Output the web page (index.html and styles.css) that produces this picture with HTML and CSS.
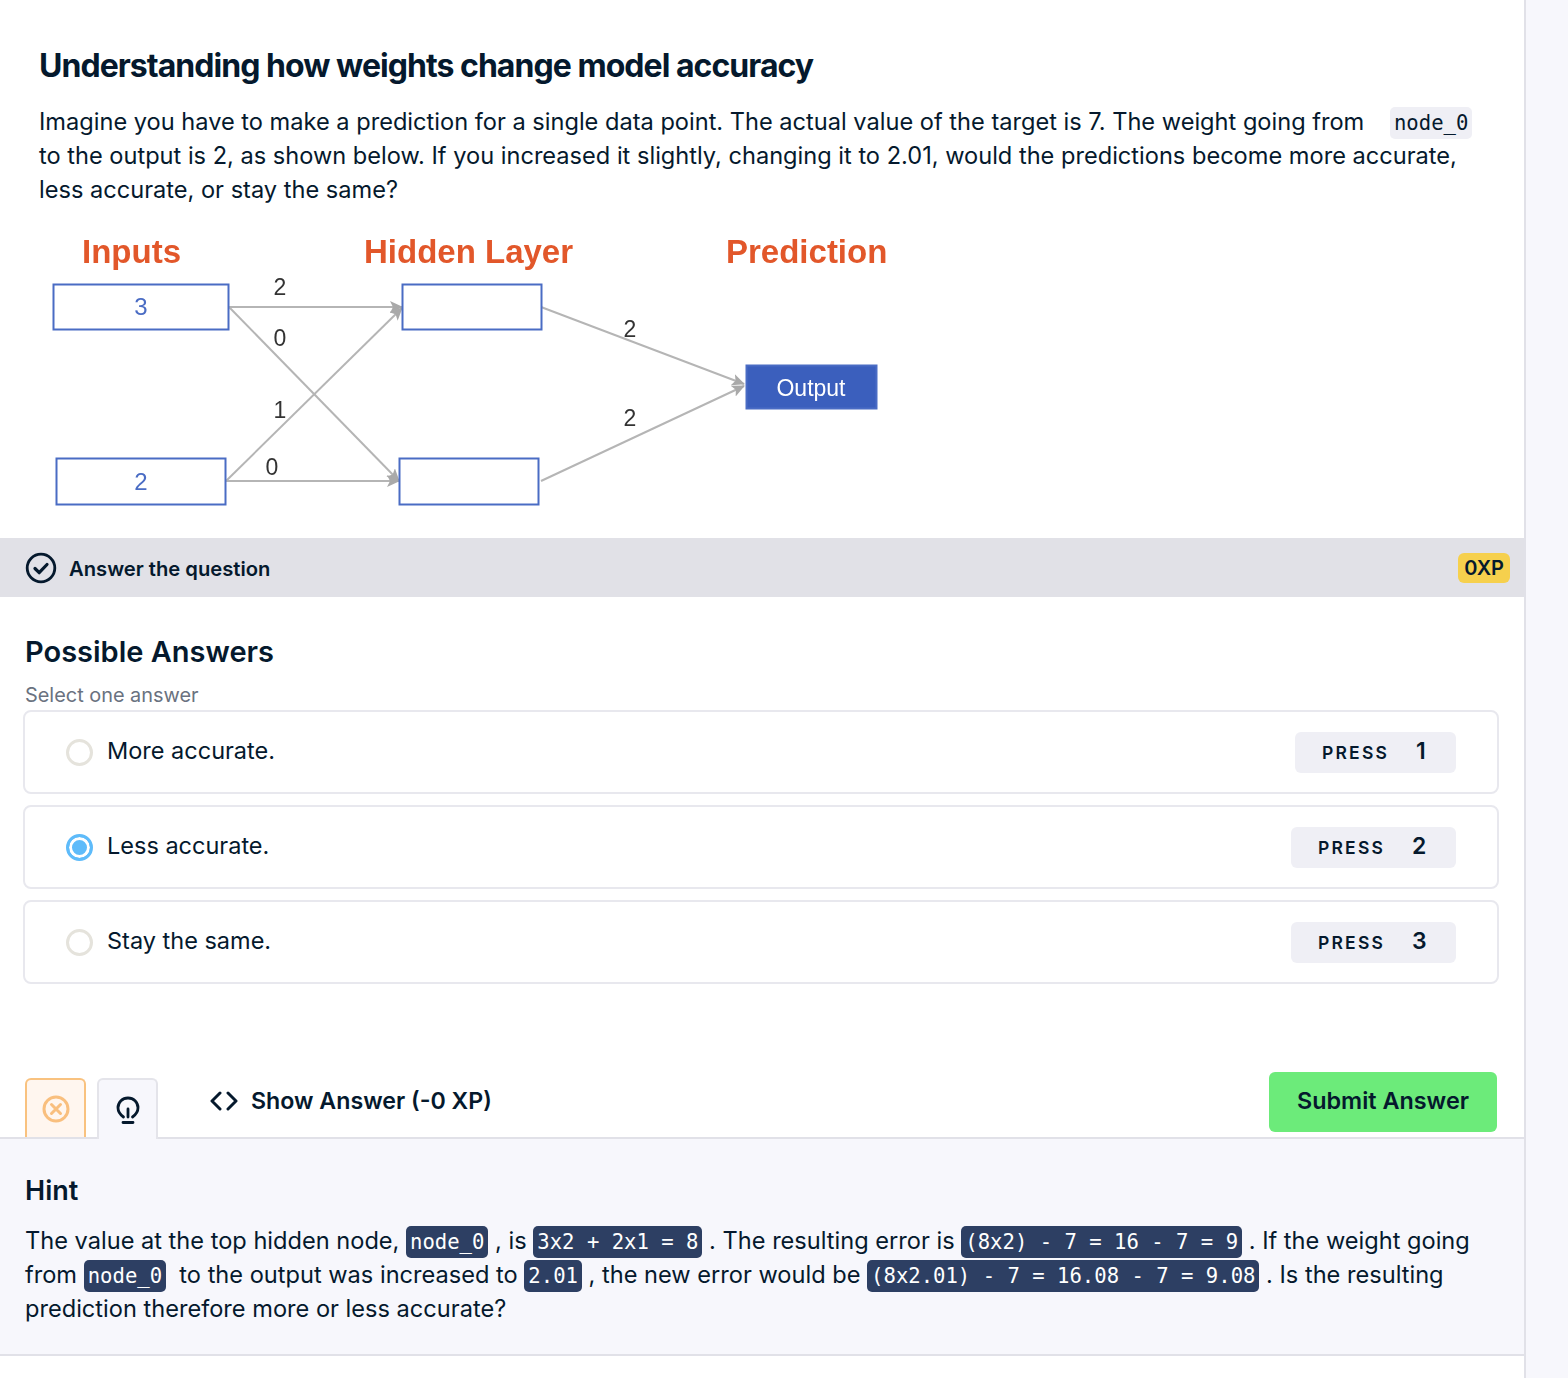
FILE: index.html
```html
<!DOCTYPE html>
<html lang="en">
<head>
  <meta charset="utf8">
  <title>Understanding how weights change model accuracy</title>
  <link rel="stylesheet" href="styles.css">
</head>
<body>
  <main class="exercise">
    <section class="context">
      <h1>Understanding how weights change model accuracy</h1>
      <p>Imagine you have to make a prediction for a single data point. The actual value of the target is 7. The weight going from <code class="gap">node_0</code> to the output is 2, as shown below. If you increased it slightly, changing it to 2.01, would the predictions become more accurate, less accurate, or stay the same?</p>
      <svg class="diagram" width="880" height="294" viewBox="0 0 880 294">
        <defs>
          <marker id="arrow" markerWidth="14" markerHeight="12" refX="12" refY="6" orient="auto" markerUnits="userSpaceOnUse">
            <path d="M0 0L13 6L0 12L3 6Z" fill="#a9a9a9"/>
          </marker>
        </defs>
        <g class="heads">
          <text x="48" y="37">Inputs</text>
          <text x="330" y="37">Hidden Layer</text>
          <text x="692" y="37">Prediction</text>
        </g>
        <g class="wires">
          <path d="M195 81H368" marker-end="url(#arrow)"/>
          <path d="M195 81L365 255" marker-end="url(#arrow)"/>
          <path d="M192 255L368 82" marker-end="url(#arrow)"/>
          <path d="M192 255H365" marker-end="url(#arrow)"/>
          <path d="M507 81L710 158" marker-end="url(#arrow)"/>
          <path d="M507 255L710 160" marker-end="url(#arrow)"/>
        </g>
        <g class="boxes">
          <rect x="19.5" y="58.5" width="175" height="45"/>
          <rect x="22.5" y="232.5" width="169" height="46"/>
          <rect x="368.500" y="58.500" width="139" height="45"/>
          <rect x="365.5" y="232.5" width="139" height="46"/>
          <rect class="filled" x="712.5" y="139.5" width="130" height="43"/>
        </g>
        <g class="inputs">
          <text x="107" y="89">3</text>
          <text x="107" y="264">2</text>
        </g>
        <text class="out" x="777" y="170">Output</text>
        <g class="weights">
          <text x="246" y="69">2</text>
          <text x="246" y="120">0</text>
          <text x="246" y="192">1</text>
          <text x="238" y="249">0</text>
          <text x="596" y="111">2</text>
          <text x="596" y="200">2</text>
        </g>
      </svg>
    </section>

    <div class="task-bar">
      <div class="task-title">
        <svg width="32" height="32" viewBox="0 0 32 32" fill="none" stroke="#05192d">
          <circle cx="16" cy="16" r="13.800" stroke-width="2.800"/>
          <path d="M10 16.500l4.200 4.200L22 12.500" stroke-width="3.200" stroke-linecap="round" stroke-linejoin="round"/>
        </svg>
        <span>Answer the question</span>
      </div>
      <span class="xp">0XP</span>
    </div>

    <section class="answers">
      <h2>Possible Answers</h2>
      <div class="hint-line">Select one answer</div>
      <div class="option">
        <span class="radio"></span>
        <span class="label">More accurate.</span>
        <span class="press"><span>PRESS</span><b>1</b></span>
      </div>
      <div class="option">
        <span class="radio checked"></span>
        <span class="label">Less accurate.</span>
        <span class="press wide"><span>PRESS</span><b>2</b></span>
      </div>
      <div class="option">
        <span class="radio"></span>
        <span class="label">Stay the same.</span>
        <span class="press wide"><span>PRESS</span><b>3</b></span>
      </div>
    </section>

    <div class="actions">
      <div class="tab tab-x">
        <svg width="28" height="28" viewBox="0 0 28 28" fill="none" stroke="#f9bf7e" stroke-width="3">
          <circle cx="14" cy="14" r="12"/>
          <path d="M9.500 9.500l9 9M18.500 9.500l-9 9" stroke-linecap="round"/>
        </svg>
      </div>
      <div class="tab tab-hint">
        <svg width="24" height="30" viewBox="0 0 24 30" fill="none" stroke="#05192d" stroke-width="2.800" stroke-linecap="round">
          <path d="M7.500 21C4 18.500 2 15.500 2 11.800 2 6 6.500 2 12 2s10 4 10 9.800c0 3.700-2 6.700-5.500 9.200"/>
          <path d="M12 13v8M7 26.500h10"/>
        </svg>
      </div>
      <div class="show-answer">
        <svg width="28" height="20" viewBox="0 0 28 20" fill="none" stroke="#05192d" stroke-width="3" stroke-linecap="round" stroke-linejoin="round">
          <path d="M10 2L2 10l8 8M18 2l8 8-8 8"/>
        </svg>
        <span>Show Answer (-0 XP)</span>
      </div>
      <button class="submit">Submit Answer</button>
    </div>

    <section class="hint">
      <h3>Hint</h3>
      <p>The value at the top hidden node, <code>node_0</code> , is <code>3x2 + 2x1 = 8</code> . The resulting error is <code>(8x2) - 7 = 16 - 7 = 9</code> . If the weight going from <code>node_0</code> &nbsp;to the output was increased to <code>2.01</code> , the new error would be <code>(8x2.01) - 7 = 16.08 - 7 = 9.08</code> . Is the resulting prediction therefore more or less accurate?</p>
    </section>
  </main>
</body>
</html>
```

FILE: styles.css
```css
* { box-sizing: border-box; }
html, body { height: 100%; }
body { margin: 0; background: #f7f7fc; color: #05192d; font-family: "Inter", "Noto Sans", sans-serif; overflow: hidden; }

.exercise { width: 1526px; height: 1378px; background: #fff; border-right: 2px solid #e1e1e8; }

.context { padding: 44px 39px 0; height: 538px; }
.context h1 { margin: 0 0 17px; font-size: 32px; line-height: 44px; font-weight: 700; letter-spacing: -0.96px; }
.context p { margin: 0; font-size: 23.6px; line-height: 34px; width: 1440px; }
.context code { background: #efeff5; color: #05192d; }
.context code.gap { margin-left: 19px; }
code { font-family: "DejaVu Sans Mono", monospace; font-size: 20.6px; line-height: 1; letter-spacing: 0; padding: 4px; border-radius: 5px; }

.diagram { display: block; margin: 19px 0 0 -5px; filter: blur(0.6px); }
.diagram text { font-family: "Liberation Sans", sans-serif; }
.heads text { font-size: 33px; font-weight: 700; fill: #e2572a; }
.wires path { fill: none; stroke: #b5b5b5; stroke-width: 2; }
.boxes rect { fill: #fff; stroke: #4a6cc4; stroke-width: 2; }
.boxes rect.filled { fill: #3b5fbd; }
.inputs text { font-size: 24px; fill: #4a6cc4; text-anchor: middle; }
.out { font-size: 23px; fill: #fff; text-anchor: middle; }
.weights text { font-size: 23px; fill: #333; text-anchor: middle; }

.task-bar { height: 59px; padding: 0 14px 0 25px; background: #e1e1e7; display: flex; align-items: center; justify-content: space-between; }
.task-title { display: flex; align-items: center; gap: 12px; font-size: 20.2px; font-weight: 600; }
.task-title span { margin-top: 2px; }
.xp { height: 30px; padding: 0 6px; background: #f6d04d; border-radius: 6px; font-size: 20px; line-height: 30px; font-weight: 600; }

.answers { padding: 32px 25px 0 23px; height: 462px; }
.answers h2 { margin: 0 0 0 2px; font-size: 29px; line-height: 46px; font-weight: 600; }
.hint-line { margin: 7px 0 0 2px; font-size: 19.9px; line-height: 26px; color: #6a7280; }
.option { height: 84px; margin-bottom: 11px; padding: 0 41px; border: 2px solid #e8e8ee; border-radius: 8px; display: flex; align-items: center; }
.hint-line + .option { margin-top: 2px; }
.radio { width: 27px; height: 27px; border: 3px solid #e5e3dc; border-radius: 50%; margin-right: 14px; margin-top: 1px; }
.radio.checked { border-color: #5ebbfa; background: #5ebbfa; box-shadow: inset 0 0 0 3px #fff; }
.label { font-size: 23.5px; margin-top: -4px; }
.press { margin-left: auto; margin-top: 1px; width: 161px; height: 41px; padding-left: 27px; background: #efeff5; border-radius: 6px; display: flex; align-items: center; font-size: 17.5px; font-weight: 600; letter-spacing: 2.2px; }
.press.wide { width: 165px; }
.press b { font-size: 23px; margin-left: 27px; letter-spacing: 0; margin-top: -4px; font-weight: 600; }

.actions { height: 78px; padding: 0 27px 0 25px; display: flex; align-items: flex-start; }
.tab { width: 61px; height: 59px; margin-top: 19px; margin-right: 11px; border: 2px solid; border-bottom: 0; border-radius: 6px 6px 0 0; display: flex; align-items: center; justify-content: center; }
.tab-x { background: #fff6ef; border-color: #f9c27f; }
.tab-hint { background: #f7f7fc; border-color: #e4e4ea; position: relative; z-index: 1; height: 61px; padding-top: 2px; }
.show-answer { margin: 20px 0 0 41px; height: 44px; display: flex; align-items: center; gap: 13px; font-size: 23.2px; font-weight: 600; }
.submit { margin: 13px 0 0 auto; width: 228px; height: 60px; padding: 0 0 4px; background: #6ceb7a; border: 0; border-radius: 6px; color: #05192d; font-family: inherit; font-size: 23.4px; font-weight: 600; }

.hint { height: 219px; padding: 32px 25px 0; background: #f7f7fc; border-top: 2px solid #e1e1e8; border-bottom: 2px solid #e1e1e8; }
.hint h3 { margin: 0 0 13px; font-size: 27px; line-height: 40px; font-weight: 600; }
.hint p { margin: 0; font-size: 23.6px; line-height: 34px; width: 1460px; }
.hint code { background: #2d3f63; color: #fff; }
```
